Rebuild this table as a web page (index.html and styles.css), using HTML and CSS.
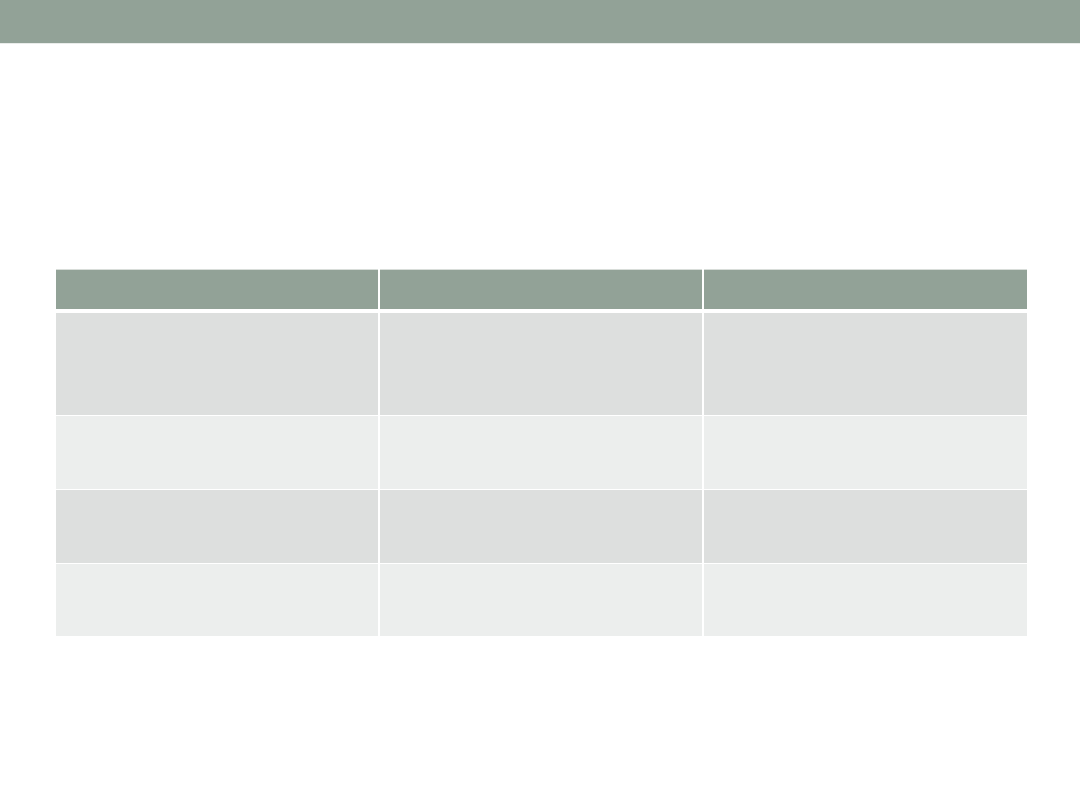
FILE: index.html
```html
<!DOCTYPE html>
<html>
<head>
<meta charset="utf-8">
<link rel="stylesheet" href="styles.css">
</head>
<body>
<div class="topbar"></div>
<main class="slide">
  <div class="grid">
    <div class="cell head"></div><div class="cell head"></div><div class="cell head"></div>
    <div class="cell odd tall"></div><div class="cell odd tall"></div><div class="cell odd tall"></div>
    <div class="cell even"></div><div class="cell even"></div><div class="cell even"></div>
    <div class="cell odd"></div><div class="cell odd"></div><div class="cell odd"></div>
    <div class="cell even"></div><div class="cell even"></div><div class="cell even"></div>
  </div>
</main>
</body>
</html>
```
FILE: styles.css
```css
html, body {
  margin: 0;
  padding: 0;
  background: #ffffff;
  font-family: "Liberation Sans", Arial, sans-serif;
}
.topbar {
  height: 43px;
  background: #92a297;
  border-bottom: 1px solid #e9ecea;
}
.slide {
  padding: 225px 0 0 56px;
}
.grid {
  width: 971px;
  display: grid;
  grid-template-columns: 322px 322px 323px;
  grid-template-rows: 43px 102px 73px 73px 72px;
  column-gap: 2px;
  row-gap: 1px;
}
.cell.head {
  background: #92a297;
  border-top: 1px solid #d8ddd9;
  margin-bottom: 3px;
}
.cell.odd {
  background: #dddfde;
}
.cell.even {
  background: #eceeed;
}
```
